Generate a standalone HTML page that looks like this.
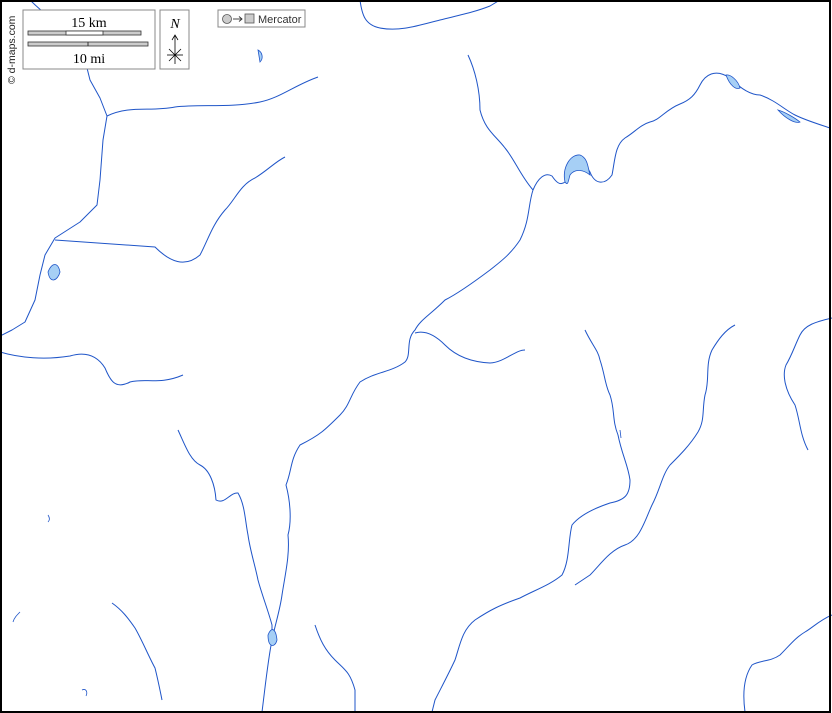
<!DOCTYPE html>
<html><head><meta charset="utf-8"><style>
html,body{margin:0;padding:0;background:#fff}
svg{display:block}
</style></head><body>
<svg width="832" height="713" viewBox="0 0 832 713" xmlns="http://www.w3.org/2000/svg">
<rect x="0" y="0" width="832" height="713" fill="#fff"/>
<g fill="none" stroke="#1f55c8" stroke-width="1" stroke-linejoin="round">
<path d="M30,0 C45,15 60,25 75,35 L85,60 L90,80 L100,98 L107,116 L103,140 L100,180 L97,205 L80,222 L55,238 L45,255 L40,275 L35,300 L25,322 L12,330 L0,336"/>
<path d="M107,116 C130,105 150,112 175,107 C200,104 230,108 260,102 C280,98 295,85 318,77"/>
<path d="M55,240 C80,242 110,244 155,247 C170,262 185,268 200,255 C208,240 212,225 225,210 C235,200 240,185 255,178 C268,170 275,162 285,157"/>
<path d="M0,352 C20,358 45,360 70,356 C90,350 100,360 105,368 C110,380 115,390 130,382 C145,378 160,385 183,375"/>
<path d="M468,55 C475,70 480,90 480,110 C485,130 495,135 505,148 C515,160 520,175 533,190 C528,205 530,220 520,240 C510,255 500,262 490,270 C470,285 455,295 445,300 C430,315 420,320 415,330 C405,340 412,355 405,362 C392,372 375,372 360,382 C350,395 350,405 340,415 C325,430 320,435 300,445 C290,460 292,470 286,485 C290,500 292,520 288,535 C290,555 285,575 282,595 C280,610 275,625 272,640 C268,660 266,680 262,712"/>
<path d="M533,190 C538,178 545,172 552,176 C556,182 560,186 565,182 C568,165 580,155 590,172 C595,185 605,185 612,175 C615,160 615,145 625,138 C635,132 640,125 650,122 C660,120 665,110 680,104 C690,100 695,95 700,85 C705,75 715,68 730,78 C740,88 750,95 760,95 C775,100 785,110 795,115 C805,120 815,123 830,128"/>
<path d="M415,333 C425,330 435,335 445,345 C455,355 470,362 490,363 C505,362 515,350 525,350"/>
<path d="M178,430 C185,445 190,460 200,465 C210,470 215,485 216,500 C225,505 230,492 238,493 C245,505 245,520 248,535 C250,550 255,565 258,580 C262,595 268,610 272,625 L272,640"/>
<path d="M585,330 C592,345 598,350 600,360 C605,375 605,385 610,395 C615,410 612,420 618,435 C622,455 628,465 630,480 C630,495 625,500 610,503 C595,508 580,515 572,525 C568,540 570,560 562,575 C550,585 535,590 520,598 C500,605 490,610 475,620 C462,630 460,645 455,660 C448,675 440,690 435,700 L432,712"/>
<path d="M735,325 C725,330 718,340 712,350 C705,365 710,380 705,395 C702,410 705,420 698,432 C690,445 680,455 670,465 C662,475 660,490 652,505 C645,520 640,540 625,545 C610,550 600,565 590,575 L575,585"/>
<path d="M832,318 C815,322 805,325 800,335 C795,345 792,355 786,365 C782,375 785,390 795,405 C800,420 800,435 808,450"/>
<path d="M832,615 C820,620 812,628 805,632 C795,638 790,645 780,655 C770,662 760,660 752,665 C745,675 742,690 745,712"/>
<path d="M112,603 C122,610 128,618 135,628 C142,640 148,655 155,668 C158,680 160,690 162,700"/>
<path d="M315,625 C320,640 325,650 335,660 C345,670 350,672 355,690 L355,712"/>
<path d="M360,0 C362,15 365,25 380,28 C400,32 420,25 440,20 C460,15 475,12 490,6 L500,0"/>
</g>
<g fill="#a6cff5" stroke="#1f55c8" stroke-width="0.8">
<path d="M565,182 C562,168 570,154 580,155 C588,158 588,168 590,175 C584,170 575,168 570,175 C568,182 568,186 565,182 Z"/>
<path d="M726,75 C730,74 738,80 740,88 C736,90 730,86 726,75 Z"/>
<path d="M778,110 C785,112 795,118 800,122 C795,124 785,118 778,110 Z"/>
<path d="M48,272 C52,262 58,262 60,272 C58,280 50,285 48,272 Z"/>
<path d="M268,635 C272,625 276,630 277,640 C275,648 268,648 268,635 Z"/>
<path d="M258,50 C262,52 264,58 260,62 Z"/>
<path d="M20,612 C17,615 14,618 13,622" fill="none"/>
<path d="M48,515 C50,518 50,520 48,522" fill="none"/>
<path d="M82,690 C86,688 88,692 86,696" fill="none"/>
<path d="M620,430 L621,438" fill="none"/>
</g>
<rect x="23" y="10" width="132" height="59" fill="#fff" stroke="#888" stroke-width="1"/>
<text x="89" y="27" font-family="Liberation Serif, serif" font-size="14" text-anchor="middle">15 km</text>
<rect x="28" y="31" width="113" height="4" fill="#ccc" stroke="#333" stroke-width="0.8"/>
<rect x="66" y="31" width="37" height="4" fill="#fff" stroke="#333" stroke-width="0.8"/>
<rect x="28" y="42" width="120" height="4" fill="#ccc" stroke="#333" stroke-width="0.8"/>
<line x1="88" y1="42" x2="88" y2="46" stroke="#333"/>
<text x="89" y="63" font-family="Liberation Serif, serif" font-size="14" text-anchor="middle">10 mi</text>
<rect x="160" y="10" width="29" height="59" fill="#fff" stroke="#888" stroke-width="1"/>
<text x="175" y="28" font-family="Liberation Serif, serif" font-style="italic" font-size="14" text-anchor="middle">N</text>
<g stroke="#000" stroke-width="0.8" fill="none">
<line x1="175" y1="36" x2="175" y2="64"/>
<path d="M172,40 L175,35 L178,40"/>
<line x1="167" y1="55" x2="183" y2="55"/>
<line x1="169" y1="49" x2="181" y2="61"/>
<line x1="181" y1="49" x2="169" y2="61"/>
</g>
<rect x="218" y="10" width="87" height="17" fill="#fff" stroke="#888" stroke-width="1"/>
<circle cx="227" cy="19" r="4.5" fill="#ccc" stroke="#555" stroke-width="0.8"/>
<line x1="233" y1="19" x2="242" y2="19" stroke="#333" stroke-width="0.9"/>
<path d="M239,16.5 L242,19 L239,21.5" fill="none" stroke="#333" stroke-width="0.9"/>
<rect x="245" y="14" width="9" height="9" fill="#ccc" stroke="#555" stroke-width="0.8"/>
<text x="258" y="23" font-family="Liberation Sans, sans-serif" font-size="11" fill="#333">Mercator</text>
<text transform="translate(15,84) rotate(-90)" font-family="Liberation Sans, sans-serif" font-size="10.5" fill="#222">© d-maps.com</text>
<rect x="1" y="1" width="829" height="711" fill="none" stroke="#000" stroke-width="2"/>
</svg>
</body></html>
